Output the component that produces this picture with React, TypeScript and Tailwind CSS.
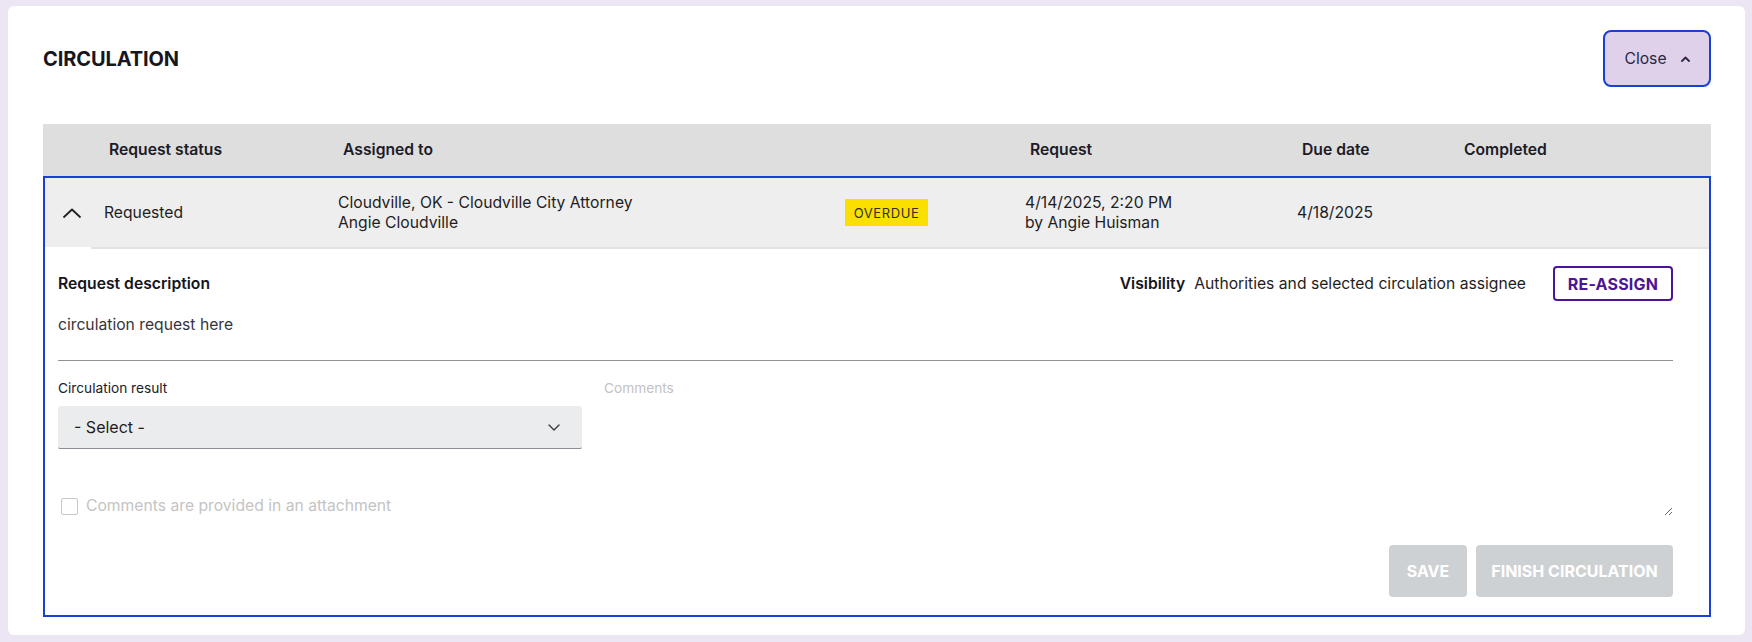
import React from "react";

function ChevronUp({ className }: { className?: string }) {
  return (
    <svg className={className} width="18" height="10" viewBox="0 0 18 10" fill="none">
      <polyline points="1,9 9,1.5 17,9" stroke="#1f1f1f" strokeWidth="1.8" strokeLinecap="round" strokeLinejoin="round" />
    </svg>
  );
}

export default function App() {
  return (
    <div className="w-full h-[642px] bg-[#ece6f4] pt-[6px] pl-[8px] pr-[7px] pb-[7px] font-['Inter',sans-serif] text-[#1d1c24]">
      <div className="bg-white rounded-[6px] h-full pl-[35px] pr-[34px] pt-[24px]">
        {/* Title row */}
        <div className="flex items-center justify-between h-[57px]">
          <h2 className="text-[20px] font-bold tracking-[-0.1px] text-[#17161f]">CIRCULATION</h2>
          <button className="w-[108px] h-[57px] border-2 border-[#1a3fd6] rounded-[8px] bg-[#dfd1ea] flex items-center justify-center gap-[14px] text-[15.7px] text-[#2a2846]">
            <span>Close</span>
            <svg width="9" height="6" viewBox="0 0 9 6" fill="none">
              <polyline points="1,5 4.5,1.5 8,5" stroke="#2a2846" strokeWidth="1.8" strokeLinecap="round" strokeLinejoin="round" />
            </svg>
          </button>
        </div>

        {/* Table header */}
        <div className="mt-[37px] h-[52px] bg-[#dedede] flex items-center pl-[66px] text-[15.7px] font-semibold text-[#1c1b26]">
          <div className="w-[234px]">Request status</div>
          <div className="w-[687px]">Assigned to</div>
          <div className="w-[272px]">Request</div>
          <div className="w-[162px]">Due date</div>
          <div>Completed</div>
        </div>

        {/* Expanded row */}
        <div className="border-2 border-[#1a3fd6]">
          <div className="h-[69px] bg-[#eeeeee] flex items-center text-[15.7px] leading-[20px] text-[#1e1d22]">
            <div className="w-[59px] pl-[18px] flex items-center">
              <ChevronUp />
            </div>
            <div className="w-[234px]">Requested</div>
            <div className="w-[507px]">
              <div>Cloudville, OK - Cloudville City Attorney</div>
              <div>Angie Cloudville</div>
            </div>
            <div className="w-[180px]">
              <span className="inline-flex items-center justify-center w-[83px] h-[27px] bg-[#f9e000] text-[13px] tracking-[0.6px] text-[#33301a]">
                OVERDUE
              </span>
            </div>
            <div className="w-[272px]">
              <div>4/14/2025, 2:20 PM</div>
              <div>by Angie Huisman</div>
            </div>
            <div>4/18/2025</div>
          </div>
          <div className="h-[2px] ml-[46px] bg-[#e3e3e3]" />

          {/* Details */}
          <div className="pl-[13px] pr-[36px] pb-[18px]">
            <div className="mt-[17px] flex items-center justify-between h-[35px]">
              <div className="text-[15.7px] font-semibold text-[#15141c]">Request description</div>
              <div className="flex items-center">
                <span className="text-[15.7px] font-semibold text-[#15141c]">Visibility</span>
                <span className="ml-[9px] text-[15.7px] text-[#1e1d22]">Authorities and selected circulation assignee</span>
                <button className="ml-[27px] w-[120px] h-[35px] border-2 border-[#4c1496] rounded-[4px] text-[16px] font-bold tracking-[0.2px] text-[#4c1496]">
                  RE-ASSIGN
                </button>
              </div>
            </div>
            <div className="mt-[14px] text-[15.7px] leading-[20px] text-[#36353d]">circulation request here</div>
            <div className="mt-[25px] border-t-[1.5px] border-[#8f9297]" />

            <div className="flex gap-[22px]">
              <div className="w-[524px]">
                <div className="mt-[19px] text-[13.7px] leading-[16px] text-[#222126]">Circulation result</div>
                <div className="mt-[10px] h-[43px] bg-[#ebecee] rounded-t-[4px] rounded-b-[2px] border-b-[1.5px] border-[#8a8e95] flex items-center justify-between pl-[16px] pr-[22px]">
                  <span className="text-[16px] text-[#1e1d22]">- Select -</span>
                  <svg width="12" height="7" viewBox="0 0 12 7" fill="none">
                    <polyline points="1,1 6,6 11,1" stroke="#3a3a3a" strokeWidth="1.4" strokeLinecap="round" strokeLinejoin="round" />
                  </svg>
                </div>
                <label className="mt-[47px] ml-[3px] flex items-center gap-[8px] h-[20px]">
                  <span className="w-[17px] h-[17px] border-[1.5px] border-[#c9c9c9] rounded-[2px] bg-white" />
                  <span className="text-[15.7px] text-[#c4c4c4]">Comments are provided in an attachment</span>
                </label>
              </div>
              <div className="flex-1">
                <div className="mt-[19px] text-[13.7px] leading-[16px] text-[#c2c2c2]">Comments</div>
                <textarea className="block w-full h-[120px] resize-y border-0 outline-none bg-white" />
              </div>
            </div>

            <div className="mt-[29px] flex justify-end gap-[9px]">
              <button className="w-[78px] h-[52px] rounded-[4px] bg-[#ced1d4] text-white text-[16px] font-bold">SAVE</button>
              <button className="w-[197px] h-[52px] rounded-[4px] bg-[#ced1d4] text-white text-[16px] font-bold">FINISH CIRCULATION</button>
            </div>
          </div>
        </div>
      </div>
    </div>
  );
}
